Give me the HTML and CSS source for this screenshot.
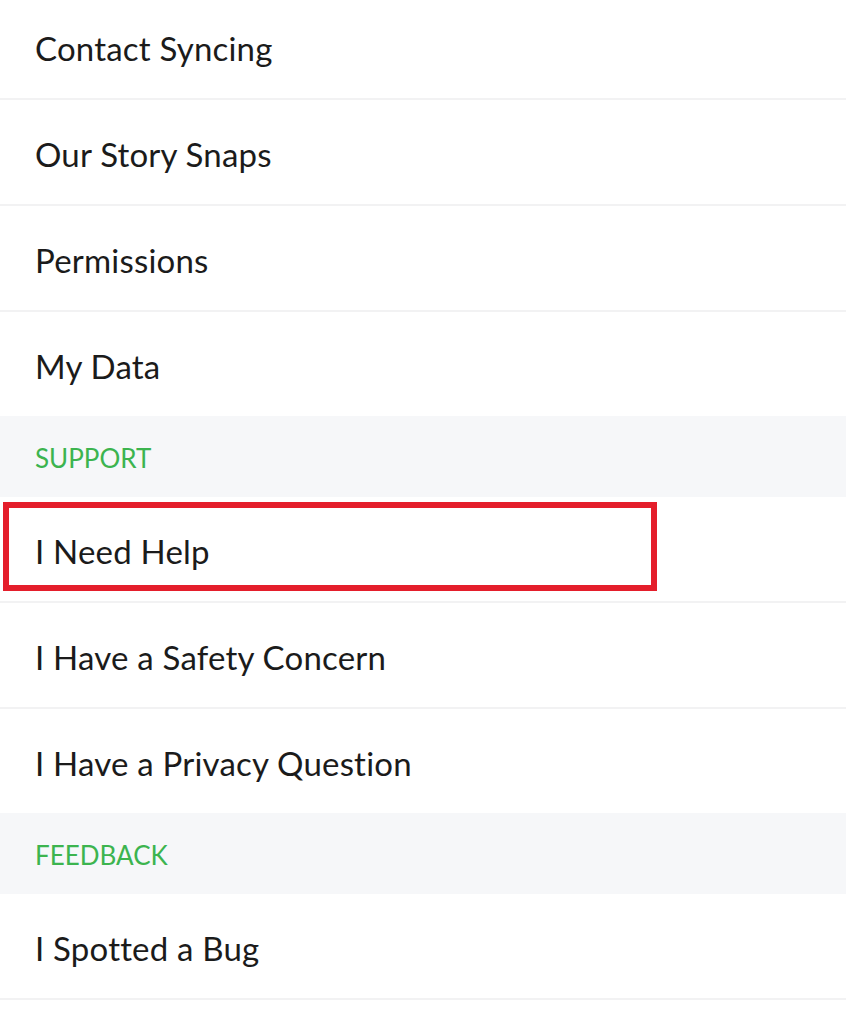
FILE: index.html
```html
<!DOCTYPE html>
<html lang="en">
<head>
    <meta charset="UTF-8">
    <meta name="viewport" content="width=device-width, initial-scale=1.0">
    <title>Settings</title>
    <link rel="stylesheet" href="styles.css">
</head>
<body>
    <div class="settings">
        <div class="group">
            <div class="row">Contact Syncing</div>
            <div class="row">Our Story Snaps</div>
            <div class="row">Permissions</div>
            <div class="row">My Data</div>
        </div>

        <div class="section">SUPPORT</div>
        <div class="group">
            <div class="row highlighted">I Need Help</div>
            <div class="row">I Have a Safety Concern</div>
            <div class="row">I Have a Privacy Question</div>
        </div>

        <div class="section">FEEDBACK</div>
        <div class="group last">
            <div class="row">I Spotted a Bug</div>
        </div>
    </div>
</body>
</html>
```

FILE: styles.css
```css
body {
    margin: 0;
    padding: 0;
    background: #fff;
    font-family: Lato, "Noto Sans", sans-serif;
    overflow: hidden;
}

.settings {
    margin-top: -6px;
}

.row {
    height: 104px;
    box-sizing: border-box;
    display: flex;
    align-items: center;
    padding: 3px 0 0 35px;
    font-size: 33px;
    letter-spacing: 0.2px;
    color: #1b1b1b;
    border-bottom: 2px solid #f2f2f3;
}

.group .row {
    height: 106px;
}

.group .row:last-child {
    height: 104px;
    border-bottom: none;
}

.group.last .row:last-child {
    height: 106px;
    border-bottom: 2px solid #f2f2f3;
}

.section {
    height: 81px;
    display: flex;
    align-items: center;
    padding: 2px 0 0 35px;
    box-sizing: border-box;
    background-color: #f6f7f9;
    color: #3cb44f;
    font-size: 26px;
}

.highlighted {
    position: relative;
}

.highlighted::after {
    content: "";
    position: absolute;
    left: 3px;
    top: 5px;
    width: 642px;
    height: 77px;
    border: 6px solid #e41e2b;
}
```
